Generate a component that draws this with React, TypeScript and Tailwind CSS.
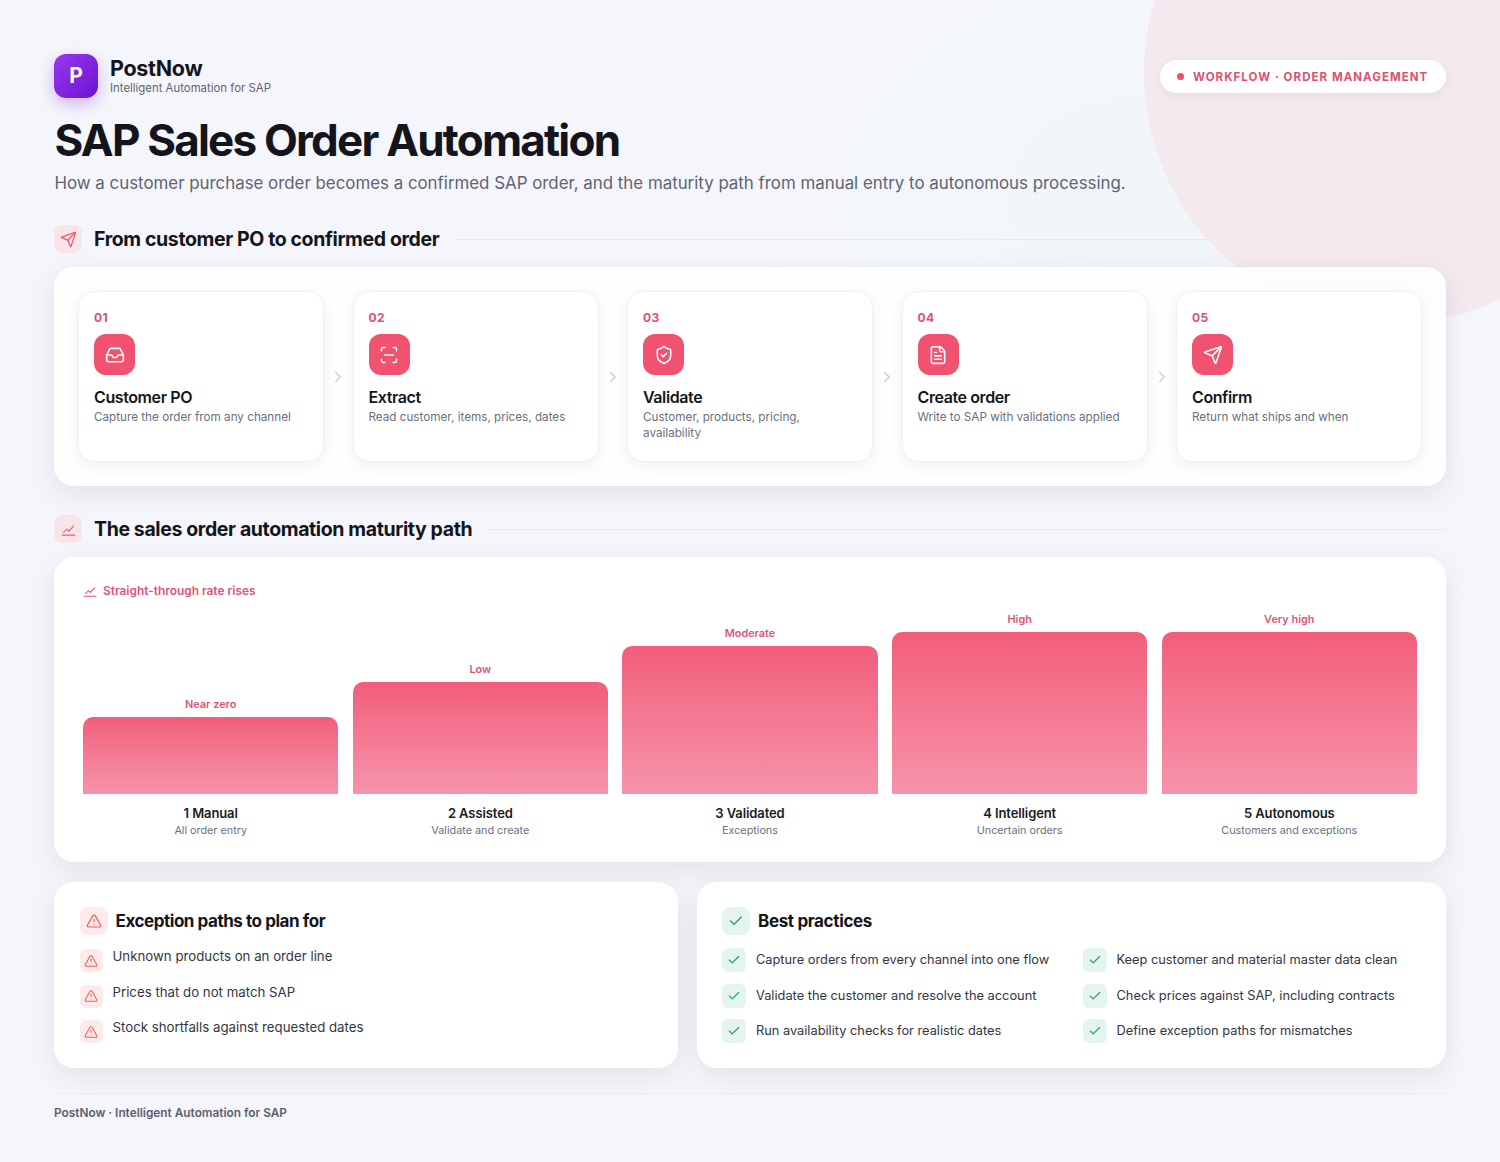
import { Fragment } from "react";
import { Check, ChevronRight, FileText, Inbox, ScanLine, Send, ShieldCheck, TriangleAlert } from "lucide-react";

const body = { fontFamily: "Inter, sans-serif" };

const steps = [
  { n: "01", title: "Customer PO", desc: "Capture the order from any channel", Icon: Inbox },
  { n: "02", title: "Extract", desc: "Read customer, items, prices, dates", Icon: ScanLine },
  { n: "03", title: "Validate", desc: "Customer, products, pricing, availability", Icon: ShieldCheck },
  { n: "04", title: "Create order", desc: "Write to SAP with validations applied", Icon: FileText },
  { n: "05", title: "Confirm", desc: "Return what ships and when", Icon: Send },
];

const levels = [
  { label: "Near zero", h: "h-[77px]", name: "1 Manual", sub: "All order entry" },
  { label: "Low", h: "h-[112px]", name: "2 Assisted", sub: "Validate and create" },
  { label: "Moderate", h: "h-[148px]", name: "3 Validated", sub: "Exceptions" },
  { label: "High", h: "h-[162px]", name: "4 Intelligent", sub: "Uncertain orders" },
  { label: "Very high", h: "h-[162px]", name: "5 Autonomous", sub: "Customers and exceptions" },
];

const exceptions = [
  "Unknown products on an order line",
  "Prices that do not match SAP",
  "Stock shortfalls against requested dates",
];

const practices = [
  "Capture orders from every channel into one flow",
  "Keep customer and material master data clean",
  "Validate the customer and resolve the account",
  "Check prices against SAP, including contracts",
  "Run availability checks for realistic dates",
  "Define exception paths for mismatches",
];

const TrendIcon = ({ className }: { className: string }) => (
  <svg viewBox="0 0 24 24" fill="none" stroke="currentColor" strokeWidth="1.8" strokeLinecap="round" strokeLinejoin="round" className={className}>
    <path d="M2 21h20" />
    <path d="M4 16.5l5.5-5 3 3L20 6.5" />
  </svg>
);

const SectionHeader = ({ title, children, line }: { title: string; children: React.ReactNode; line: string }) => (
  <div className="flex items-center">
    <div className="flex h-7 w-7 shrink-0 items-center justify-center rounded-lg bg-[#f8e5ea] text-[#ec5a78]">{children}</div>
    <h2 className="ml-[12px] text-[19.5px] leading-7 font-bold tracking-[-0.38px] text-[#14151c]">{title}</h2>
    <div className={`ml-[14px] h-px grow ${line}`} />
  </div>
);

export default function App() {
  return (
    <div
      className="relative h-[1162px] w-full overflow-hidden bg-[#f5f6fb] bg-[radial-gradient(ellipse_420px_300px_at_1150px_200px,#f1f6f9,transparent)]"
      style={body}
    >
      <div className="absolute top-[-177px] left-[1144px] h-[500px] w-[500px] rounded-full bg-[#f4e9ef]" />

      <div className="pt-[54px] pr-[54px] pl-[54px]">
        <div className="flex items-start justify-between">
          <div className="flex items-center gap-3">
            <div className="flex h-11 w-11 items-center justify-center rounded-xl bg-gradient-to-br from-[#9a35ee] to-[#6d0fd2] text-[21px] font-bold text-white shadow-[0_6px_16px_rgba(124,31,224,0.3)]">
              P
            </div>
            <div className="mt-[-2px]">
              <div className="text-[21.5px] leading-[26px] font-bold tracking-[-0.3px] text-[#14151c]">PostNow</div>
              <div className="text-[11.4px] leading-[14px] text-[#5f6373]">Intelligent Automation for SAP</div>
            </div>
          </div>
          <div className="relative z-10 mt-[6px] flex h-[33px] w-[286px] items-center rounded-full bg-white pl-[17px] shadow-[0_3px_10px_rgba(90,60,80,0.08)]">
            <span className="h-[7px] w-[7px] rounded-full bg-[#ec4f6d]" />
            <span className="mt-[2px] ml-[9px] text-[11.5px] font-bold tracking-[1.05px] text-[#de5072]">WORKFLOW · ORDER MANAGEMENT</span>
          </div>
        </div>

        <h1 className="mt-[18px] ml-[0.5px] h-12 text-[44px] leading-[48px] font-bold tracking-[-1.8px] text-[#14151c]">SAP Sales Order Automation</h1>
        <p className="mt-[7px] ml-[0.5px] h-6 text-[16.87px] leading-6 text-[#5f6373]">
          How a customer purchase order becomes a confirmed SAP order, and the maturity path from manual entry to autonomous processing.
        </p>

        <div className="mt-[30px]">
          <SectionHeader title="From customer PO to confirmed order" line="bg-[#e8ecf2]">
            <Send className="h-[17px] w-[17px]" strokeWidth={1.8} />
          </SectionHeader>
        </div>

        <section className="relative z-10 mt-[14px] flex h-[219px] items-start rounded-[20px] bg-white/90 p-6 shadow-[0_8px_28px_rgba(20,25,50,0.085)]">
          {steps.map((s, i) => (
            <Fragment key={s.n}>
              {i > 0 && (
                <div className="flex h-[171px] w-[28.5px] shrink-0 items-center justify-center text-[#c8cad0]">
                  <ChevronRight className="h-[18px] w-[18px]" strokeWidth={1.6} />
                </div>
              )}
              <div className="h-[171px] flex-1 rounded-2xl border border-[#f0f1f5] bg-white px-[15px] pt-[19px] shadow-[0_4px_16px_rgba(20,25,50,0.06)]">
                <div className="text-[12px] leading-[14px] font-bold tracking-[0.4px] text-[#dd5072]">{s.n}</div>
                <div className="mt-[9px] flex h-[41px] w-[41px] items-center justify-center rounded-xl bg-[#f0526f] text-white">
                  <s.Icon className="h-5 w-5" strokeWidth={1.9} />
                </div>
                <div className="mt-[11px] text-[16px] leading-[22px] font-semibold tracking-[-0.4px] text-[#14151c]">{s.title}</div>
                <div className="mt-[1px] text-[11.7px] leading-4 text-[#6b6f7e]">{s.desc}</div>
              </div>
            </Fragment>
          ))}
        </section>

        <div className="mt-[29px]">
          <SectionHeader title="The sales order automation maturity path" line="bg-[#e8ebf1]">
            <TrendIcon className="h-[15px] w-[15px]" />
          </SectionHeader>
        </div>

        <section className="relative z-10 mt-[14px] h-[305px] rounded-[20px] bg-white pt-[26px] pr-[29px] pl-[29px] shadow-[0_8px_28px_rgba(20,25,50,0.085)]">
          <div className="flex h-4 items-center text-[#de5578]">
            <TrendIcon className="h-[14px] w-[14px]" />
            <span className="ml-[6px] text-[11.9px] font-semibold">Straight-through rate rises</span>
          </div>
          <div className="mt-[5px] grid h-[190px] grid-cols-5 items-end gap-[14.3px]">
            {levels.map((l) => (
              <div key={l.name} className="flex flex-col">
                <div className="text-center text-[10.9px] leading-[14px] font-semibold text-[#de5578]">{l.label}</div>
                <div className={`mt-[6px] rounded-t-[10px] bg-gradient-to-b from-[#f25d7b] to-[#f593ab] ${l.h}`} />
              </div>
            ))}
          </div>
          <div className="grid grid-cols-5 gap-[14.3px]">
            {levels.map((l) => (
              <div key={l.name} className="pt-[10px] text-center">
                <div className="text-[13px] leading-[18px] font-semibold tracking-[-0.1px] text-[#1a1b24]">{l.name}</div>
                <div className="mt-[1px] text-[10.8px] leading-[16px] text-[#6b6f7e]">{l.sub}</div>
              </div>
            ))}
          </div>
        </section>

        <div className="relative z-10 mt-5 flex h-[186px] gap-[19px]">
          <section className="w-[623.5px] rounded-[20px] bg-white pt-[25px] pl-[25.5px] shadow-[0_8px_28px_rgba(20,25,50,0.085)]">
            <div className="flex items-center">
              <div className="flex h-7 w-7 items-center justify-center rounded-lg bg-[#fdeaea] text-[#e8605f]">
                <TriangleAlert className="h-4 w-4" strokeWidth={1.8} />
              </div>
              <h3 className="ml-2 text-[17px] leading-7 font-bold tracking-[-0.45px] text-[#14151c]">Exception paths to plan for</h3>
            </div>
            <ul className="mt-[14px] flex flex-col gap-[12.6px]">
              {exceptions.map((t) => (
                <li key={t} className="flex h-[23px] items-start">
                  <div className="flex h-[23px] w-[23px] shrink-0 items-center justify-center rounded-md bg-[#fdeaea] text-[#e8605f]">
                    <TriangleAlert className="h-[14px] w-[14px]" strokeWidth={1.8} />
                  </div>
                  <span className="mt-[-3px] ml-[10px] text-[13.25px] leading-5 text-[#33353f]">{t}</span>
                </li>
              ))}
            </ul>
          </section>

          <section className="grow rounded-[20px] bg-white pt-[25px] pl-[25.5px] shadow-[0_8px_28px_rgba(20,25,50,0.085)]">
            <div className="flex items-center">
              <div className="flex h-7 w-7 items-center justify-center rounded-lg bg-[#e3f5ee] text-[#1f9d6c]">
                <Check className="h-4 w-4" strokeWidth={1.9} />
              </div>
              <h3 className="ml-2 text-[17px] leading-7 font-bold tracking-[-0.35px] text-[#14151c]">Best practices</h3>
            </div>
            <ul className="mt-[13px] grid grid-cols-[360.5px_1fr] gap-y-[11.5px]">
              {practices.map((t) => (
                <li key={t} className="flex h-6 items-center">
                  <div className="flex h-6 w-6 shrink-0 items-center justify-center rounded-md bg-[#e3f5ee] text-[#1f9d6c]">
                    <Check className="h-[14px] w-[14px]" strokeWidth={1.9} />
                  </div>
                  <span className="ml-[10px] text-[12.8px] leading-5 text-[#33353f]">{t}</span>
                </li>
              ))}
            </ul>
          </section>
        </div>

        <footer className="mt-[25px] border-t border-[#ebedf3] pt-[11px] text-[11.84px] leading-4 font-semibold text-[#5b5f70]">
          PostNow · Intelligent Automation for SAP
        </footer>
      </div>
    </div>
  );
}
